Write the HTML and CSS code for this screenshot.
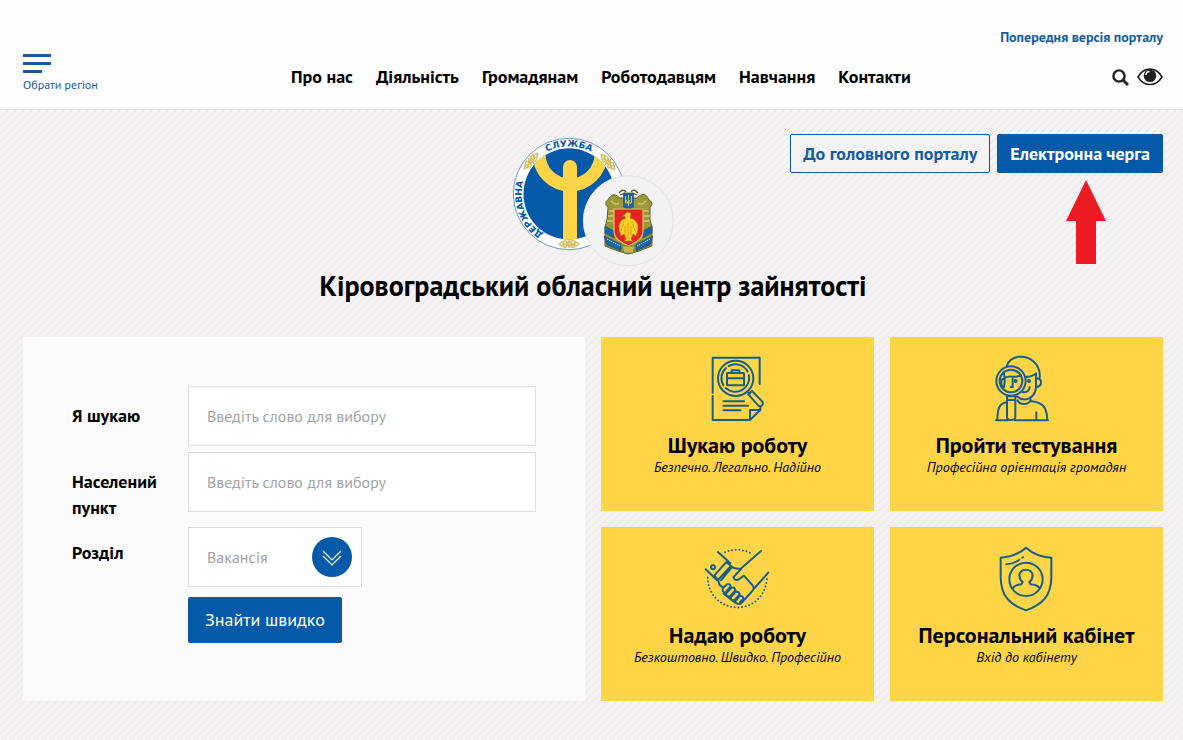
FILE: index.html
```html
<!DOCTYPE html>
<html lang="uk">
<head>
<meta charset="utf-8">
<meta name="viewport" content="width=device-width, initial-scale=1">
<title>Кіровоградський обласний центр зайнятості</title>
<link rel="stylesheet" href="styles.css">
</head>
<body>
<header class="header">
  <a class="old-version" href="#">Попередня версія порталу</a>
  <div class="header-row">
    <button class="region" type="button">
      <svg class="region-icon" viewBox="0 0 28 19" aria-hidden="true"><path d="M0 0h28v3H0zM0 8h28v3H0zM0 16h19v3H0z"/></svg>
      <span>Обрати регіон</span>
    </button>
    <nav class="nav">
      <a href="#">Про нас</a>
      <a href="#">Діяльність</a>
      <a href="#">Громадянам</a>
      <a href="#">Роботодавцям</a>
      <a href="#">Навчання</a>
      <a href="#">Контакти</a>
    </nav>
    <div class="tools">
      <button class="tool" type="button" aria-label="Пошук">
        <svg width="17" height="17" viewBox="0 0 17 17"><circle cx="7" cy="7" r="5.6" fill="none" stroke="#222" stroke-width="2.4"/><path d="M11 11l5 5" stroke="#222" stroke-width="2.8"/></svg>
      </button>
      <button class="tool" type="button" aria-label="Версія для людей з вадами зору">
        <svg width="26" height="18" viewBox="0 0 26 18"><path d="M1 9C7-1.500 19-1.500 25 9 19 19 7 19 1 9z" fill="#fff" stroke="#222" stroke-width="1.600"/><circle cx="13" cy="7.700" r="6.300" fill="#222"/><path d="M9 7c0-2 1.500-3.500 3.500-3.600" fill="none" stroke="#fff" stroke-width="1.500"/></svg>
      </button>
    </div>
  </div>
</header>
<main class="main">
  <section class="hero">
    <svg class="logo" viewBox="7 7 163 130" role="img" aria-label="Державна служба зайнятості">
      <defs>
        <path id="ring" d="M64 111.500A47.500 47.500 0 0 1 64 16.500A47.500 47.500 0 0 1 64 111.500"/>
        <clipPath id="disc"><circle cx="64" cy="64" r="45.500"/></clipPath>
        <g id="ornament" fill="none" stroke="#d8bd62" stroke-width="1.500">
          <circle r="2"/><circle cx="-4" cy="-1.500" r="1.700"/><circle cx="4" cy="-1.500" r="1.700"/><circle cx="-4" cy="2" r="1.500"/><circle cx="4" cy="2" r="1.500"/><path d="M-10 0l3-2 2 2-2 2zM10 0l-3-2-2 2 2 2zM0-4v8"/>
        </g>
      </defs>
      <circle cx="64" cy="64" r="55.700" fill="#fff" stroke="#2d6cae" stroke-width=".7"/>
      <circle cx="64" cy="64" r="45.500" fill="#0459a8"/>
      <g clip-path="url(#disc)">
        <path d="M34 8V24A31 31 0 0 0 96 24V8" fill="none" stroke="#ffd547" stroke-width="13"/>
        <path d="M58 120V37a7 7 0 0 1 14 0v83z" fill="#ffd547"/>
        <path d="M51 17h28v9H51z" fill="#0459a8"/>
      </g>
      <text class="logo-text"><textPath href="#ring" startOffset="19.200%" text-anchor="middle">ДЕРЖАВНА</textPath></text>
      <text class="logo-text"><textPath href="#ring" startOffset="50%" text-anchor="middle">СЛУЖБА</textPath></text>
      <use href="#ornament" transform="translate(26 31) rotate(-48)"/>
      <use href="#ornament" transform="translate(103 32) rotate(48)"/>
      <use href="#ornament" transform="translate(64 114)"/>
      <circle cx="123.300" cy="90.700" r="45" fill="#f3f2f3" stroke="#e3e2e3" stroke-width="1"/>
      <g stroke-linejoin="round">
        <path d="M115 68C107 61 105 67 103 70C100 71 100 76 103 77L102 90 100 97V116L113 121 123 124 134 121 147 116V97L145 90V77C148 75 147 71 144 70C141 63 137 63 132 68z" fill="#9c963d" stroke="#5f642e" stroke-width="1"/>
        <path d="M106 71q5 5 8 2M141 71q-5 5-8 2M104 81h5M139 81h5M103 86h6M139 86h6M102 91h6M139 91h6" fill="none" stroke="#d6c667" stroke-width="1.600"/>
        <path d="M114 63q4-5 7-1M133 63q-4-5-7-1M115 65l5-2M132 65l-5-2" fill="none" stroke="#4c552c" stroke-width="1.300"/>
        <path d="M118.500 63h10v14l-5 3-5-3z" fill="#1d65a6" stroke="#514e32" stroke-width=".7"/>
        <path d="M120.500 66v7h6v-7M123.500 65v11M121 70l2 3 2-3" fill="none" stroke="#e8d34b" stroke-width=".9"/>
        <path d="M100 96l9 5v7l-9-5zM147 96l-9 5v7l9-5zM99 106l17 8v7l-14-6zM148 106l-17 8v7l14-6z" fill="#1764ad" stroke="#334a49" stroke-width=".6"/>
        <path d="M102 109l13 7M145 109l-13 7" stroke="#e9e4a1" stroke-width="1" stroke-dasharray="1.500 .7"/>
        <path d="M109 79h29v22c0 8-7 11-14.500 15-7.500-4-14.500-7-14.500-15z" fill="#e52325" stroke="#d7c669" stroke-width="1.200"/>
        <path d="M122 82l4 1-1 5q9 2 8 12l-2 6-3-2-2 5 2 2h-9l2-2-2-5-3 2-2-6q-1-10 7-12l-2-2-2 1z" fill="#ffd126" stroke="#b67316" stroke-width=".7"/>
        <path d="M119 92l-3 9M123 93v16M127 92l3 9M120 96v9M126 96v9" fill="none" stroke="#c77d13" stroke-width=".6"/>
        <path d="M117 116h13l-2 7h-9z" fill="#c7b749" stroke="#67692f" stroke-width=".7"/>
      </g>
    </svg>
    <div class="portal-links">
      <a class="btn btn-outline" href="#">До головного порталу</a>
      <a class="btn btn-solid" href="#">Електронна черга
        <svg class="arrow" viewBox="0 0 40 84" aria-hidden="true"><path d="M20 0l20 41H30v43H10V41H0z"/></svg>
      </a>
    </div>
  </section>
  <h1 class="title">Кіровоградський обласний центр зайнятості</h1>
  <div class="columns">
    <form class="search">
      <div class="field">
        <label for="query">Я шукаю</label>
        <input id="query" type="text" placeholder="Введіть слово для вибору">
      </div>
      <div class="field">
        <label for="city">Населений пункт</label>
        <input id="city" type="text" placeholder="Введіть слово для вибору">
      </div>
      <div class="field field-select">
        <label for="section">Розділ</label>
        <div class="select">
          <select id="section"><option>Вакансія</option></select>
          <svg class="chevron" viewBox="0 0 40 40" aria-hidden="true"><circle cx="20" cy="20" r="20" fill="#0459a8"/><path d="M11 14l9 9 9-9M11 19l9 9 9-9" fill="none" stroke="#fff" stroke-width="1.200"/></svg>
        </div>
      </div>
      <button class="submit" type="submit">Знайти швидко</button>
    </form>
    <div class="cards">
      <a class="card" href="#">
        <svg class="card-icon" viewBox="0 0 225 225" aria-hidden="true">
          <path d="M38 128V23H179V102M38 138V210H150L181 180V172M150 210V180H180M70 154H132M70 167H144M70 181H122"/>
          <circle cx="107" cy="85" r="53"/><path d="M70 106A42 42 0 0 1 78 54M86 48A42 42 0 0 1 143 65M147 76A42 42 0 0 1 77 114"/>
          <rect x="81" y="69" width="51" height="37" rx="2"/><path d="M95 69V61H118V69M82 85H131M143 125l6 7"/><path d="M145 133l11-10 31 32q4 6-1 11t-11 1z"/>
        </svg>
        <h2>Шукаю роботу</h2>
        <p>Безпечно. Легально. Надійно</p>
      </a>
      <a class="card" href="#">
        <svg class="card-icon" viewBox="12 0 225 225" aria-hidden="true">
          <circle cx="78" cy="93" r="44"/><circle cx="78" cy="93" r="34"/>
          <path d="M66 46C76 16 121 12 145 34C161 48 166 64 164 84M122 81Q144 80 153 70V112Q151 137 130 146Q111 153 96 139M154 86Q168 84 168 97T154 111M57 70Q61 92 57 111Q49 110 49 98T57 86M58 84Q68 78 84 80Q102 80 108 77M112 126Q131 129 134 112M83 86V111H77"/>
          <circle cx="92" cy="93" r="3"/><circle cx="132" cy="93" r="3"/>
          <path d="M66 139V201Q66 210 78 210T91 201V139zM66 150H90M37 211Q37 175 48 164Q54 159 65 157M98 151Q102 162 118 162T137 148M137 153Q170 156 180 175Q187 190 187 211M33 211H69M89 211H189M154 187V210"/>
        </svg>
        <h2>Пройти тестування</h2>
        <p>Професійна орієнтація громадян</p>
      </a>
      <a class="card" href="#">
        <svg class="card-icon" viewBox="15 0 225 225" aria-hidden="true">
          <path class="dots" d="M90 37Q129 20 168 40M38 113C42 227 205 236 216 116"/>
          <circle cx="54" cy="82" r="6"/>
          <path d="M69 36L106 70M32 88L66 121M92 68L58 107L69 120L108 78L94 67M108 78Q116 87 137 86L198 33M111 81L78 121M138 87L115 112Q121 127 137 114L147 107L171 134Q181 145 171 154L142 186Q133 197 119 187L86 161M71 124Q70 135 83 141M176 147L220 98"/>
          <path d="M83 145L96 133Q105 130 107 139L91 158Q81 158 83 145zM93 161L110 143Q120 141 121 151L105 169Q94 171 93 161zM106 173L121 156Q131 153 134 163L119 180Q108 183 106 173zM121 184L133 169Q144 166 145 176L135 187"/>
        </svg>
        <h2>Надаю роботу</h2>
        <p>Безкоштовно. Швидко. Професійно</p>
      </a>
      <a class="card" href="#">
        <svg class="card-icon" viewBox="12 0 225 225" aria-hidden="true">
          <path d="M123 23Q153 50 199 53V110C199 166 173 194 123 211C73 194 47 166 47 110V53Q93 50 123 23zM64 73Q88 71 103 59M112 53l2-1"/>
          <circle cx="123" cy="118" r="50"/><path d="M82 145Q91 134 109 133L113 126Q104 119 103 107Q105 89 123 89T143 107Q142 119 133 126L137 133Q155 134 165 145"/>
        </svg>
        <h2>Персональний кабінет</h2>
        <p>Вхід до кабінету</p>
      </a>
    </div>
  </div>
</main>
</body>
</html>
```
FILE: styles.css
```css
* { box-sizing: border-box; }

body {
  margin: 0;
  min-height: 100vh;
  display: flex;
  flex-direction: column;
  font-family: "PT Sans", "Noto Sans", sans-serif;
  color: #000;
  background: #fff;
}

a { color: inherit; text-decoration: none; }
button { font-family: inherit; cursor: pointer; }
h1, h2, p { margin: 0; }

.header {
  display: flex;
  flex-direction: column;
  padding: 28px 20px 16px 23px;
  border-bottom: 1px solid #e3e3e3;
  background: #fefefe;
}
.old-version {
  align-self: flex-end;
  font-size: 14px;
  line-height: 18px;
  font-weight: 700;
  color: #155c9f;
}
.header-row {
  display: flex;
  justify-content: space-between;
  align-items: flex-start;
  padding-top: 8px;
}
.region {
  display: flex;
  flex-direction: column;
  gap: 4px;
  padding: 0;
  border: 0;
  background: none;
  font-size: 12px;
  line-height: 16px;
  color: #155c9f;
}
.region-icon { width: 28px; height: 19px; fill: #155c9f; }
.nav {
  display: flex;
  gap: 23px;
  padding: 11px 8px 0 0;
  font-size: 18px;
  line-height: 24px;
  font-weight: 700;
}
.tools { display: flex; align-items: center; gap: 8px; padding-top: 14px; }
.tool { display: flex; padding: 0; border: 0; background: none; }

.main {
  flex: 1;
  padding: 24px 20px 39px 23px;
  background: #f4f2f3 linear-gradient(135deg, transparent 46%, #e8e6e7 46%, #e8e6e7 54%, transparent 54%) 0 0 / 8px 8px;
}
.hero {
  display: grid;
  grid-template-columns: 1fr auto 1fr;
  align-items: start;
}
.logo { grid-column: 2; width: 163px; height: 130px; margin-top: 3px; }
.logo-text {
  font-family: "DejaVu Sans", sans-serif;
  font-size: 9px;
  font-weight: 700;
  fill: #0459a8;
}
.portal-links { display: flex; justify-content: flex-end; gap: 7px; }
.btn {
  position: relative;
  padding: 7px 12px;
  border: 1px solid #0459a8;
  border-radius: 2px;
  font-size: 18px;
  line-height: 23px;
  font-weight: 700;
  white-space: nowrap;
}
.btn-outline { color: #155c9f; background: #f3f3f4; }
.btn-solid { color: #fff; background: #0459a8; }
.arrow {
  position: absolute;
  top: 45px;
  right: 56px;
  width: 40px;
  height: 84px;
  fill: #ed1c24;
}
.title {
  font-size: 28px;
  line-height: 38px;
  font-weight: 700;
  text-align: center;
}

.columns {
  display: grid;
  grid-template-columns: 1fr 1fr;
  gap: 16px;
  margin-top: 32px;
}
.search { padding: 49px; background: #fbfbfb; }
.field {
  display: grid;
  grid-template-columns: 116px 1fr;
  align-items: start;
  margin-bottom: 6px;
}
.field label {
  padding-top: 17px;
  font-size: 18px;
  line-height: 26px;
  font-weight: 700;
}
.field input, .field select {
  width: 100%;
  height: 60px;
  padding: 0 18px;
  border: 1px solid #ddd;
  border-radius: 0;
  background: #fff;
  font-family: inherit;
  font-size: 16px;
  color: #a3a3a3;
}
.field input::placeholder { color: #a3a3a3; opacity: 1; }
.field select { appearance: none; }
.field-select { margin-bottom: 10px; }
.field-select label { padding-top: 13px; }
.select { position: relative; width: 174px; }
.chevron {
  position: absolute;
  top: 10px;
  right: 10px;
  width: 40px;
  height: 40px;
  pointer-events: none;
}
.submit {
  margin-left: 116px;
  padding: 10px 16px;
  border: 1px solid #0459a8;
  border-radius: 2px;
  background: #0459a8;
  color: #fff;
  font-size: 18px;
  line-height: 24px;
}

.cards { display: grid; grid-template-columns: 1fr 1fr; gap: 16px; }
.card {
  display: flex;
  flex-direction: column;
  align-items: center;
  padding: 13px 8px 36px;
  background: #ffd547;
  text-align: center;
}
.card-icon {
  width: 75px;
  height: 75px;
  fill: none;
  stroke: #155f8b;
  stroke-width: 6;
  stroke-linecap: round;
  stroke-linejoin: round;
}
.card-icon .dots { stroke-dasharray: 0 11; }
.card h2 {
  margin-top: 6px;
  font-size: 22px;
  line-height: 28px;
  font-weight: 700;
}
.card p { font-size: 14px; line-height: 16px; font-style: italic; }
```
